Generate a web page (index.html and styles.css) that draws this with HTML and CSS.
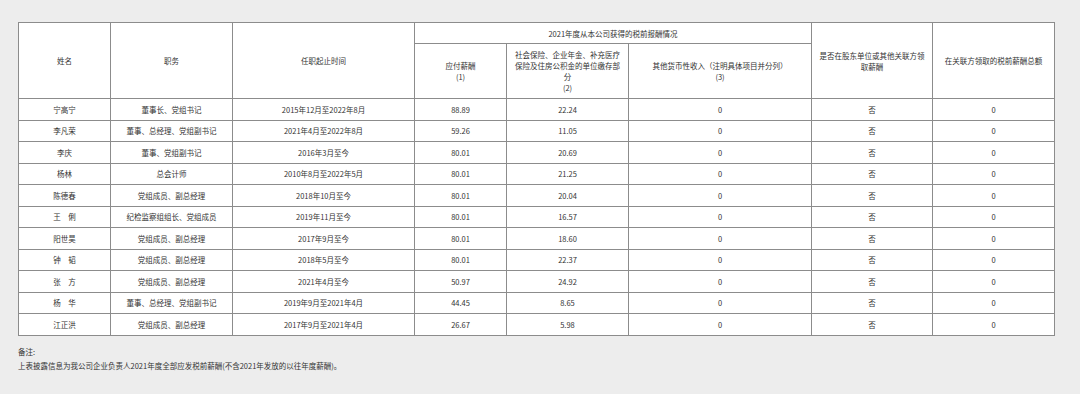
FILE: index.html
```html
<!DOCTYPE html>
<html>
<head>
	<meta charset="utf-8">
	<title>2021年度薪酬情况</title>
	<link rel="stylesheet" href="styles.css">
</head>
<body>
<div class="page">
	<table class="payTable">
		<colgroup>
			<col style="width:92px">
			<col style="width:122px">
			<col style="width:182px">
			<col style="width:92px">
			<col style="width:122px">
			<col style="width:183px">
			<col style="width:121px">
			<col style="width:122px">
		</colgroup>
		<tr class="headTop">
			<td rowspan="2">姓名</td>
			<td rowspan="2">职务</td>
			<td rowspan="2">任职起止时间</td>
			<td colspan="3">2021年度从本公司获得的税前报酬情况</td>
			<td rowspan="2" class="wrap">是否在股东单位或其他关联方领取薪酬</td>
			<td rowspan="2">在关联方领取的税前薪酬总额</td>
		</tr>
		<tr class="headSub">
			<td>应付薪酬<br>(1)</td>
			<td class="wrap">社会保险、企业年金、补充医疗保险及住房公积金的单位缴存部分<br>(2)</td>
			<td>其他货币性收入（注明具体项目并分列）<br>(3)</td>
		</tr>
		<tr><td>宁高宁</td><td>董事长、党组书记</td><td>2015年12月至2022年8月</td><td>88.89</td><td>22.24</td><td>0</td><td>否</td><td>0</td></tr>
		<tr><td>李凡荣</td><td>董事、总经理、党组副书记</td><td>2021年4月至2022年8月</td><td>59.26</td><td>11.05</td><td>0</td><td>否</td><td>0</td></tr>
		<tr><td>李庆</td><td>董事、党组副书记</td><td>2016年3月至今</td><td>80.01</td><td>20.69</td><td>0</td><td>否</td><td>0</td></tr>
		<tr><td>杨林</td><td>总会计师</td><td>2010年8月至2022年5月</td><td>80.01</td><td>21.25</td><td>0</td><td>否</td><td>0</td></tr>
		<tr><td>陈德春</td><td>党组成员、副总经理</td><td>2018年10月至今</td><td>80.01</td><td>20.04</td><td>0</td><td>否</td><td>0</td></tr>
		<tr><td>王　俐</td><td>纪检监察组组长、党组成员</td><td>2019年11月至今</td><td>80.01</td><td>16.57</td><td>0</td><td>否</td><td>0</td></tr>
		<tr><td>阳世昊</td><td>党组成员、副总经理</td><td>2017年9月至今</td><td>80.01</td><td>18.60</td><td>0</td><td>否</td><td>0</td></tr>
		<tr><td>钟　韬</td><td>党组成员、副总经理</td><td>2018年5月至今</td><td>80.01</td><td>22.37</td><td>0</td><td>否</td><td>0</td></tr>
		<tr><td>张　方</td><td>党组成员、副总经理</td><td>2021年4月至今</td><td>50.97</td><td>24.92</td><td>0</td><td>否</td><td>0</td></tr>
		<tr><td>杨　华</td><td>董事、总经理、党组副书记</td><td>2019年9月至2021年4月</td><td>44.45</td><td>8.65</td><td>0</td><td>否</td><td>0</td></tr>
		<tr><td>江正洪</td><td>党组成员、副总经理</td><td>2017年9月至2021年4月</td><td>26.67</td><td>5.98</td><td>0</td><td>否</td><td>0</td></tr>
	</table>
	<div class="notes">
		<p>备注:</p>
		<p>上表披露信息为我公司企业负责人2021年度全部应发税前薪酬(不含2021年发放的以往年度薪酬)。</p>
	</div>
</div>
</body>
</html>
```

FILE: styles.css
```css
*{
	padding: 0px;
	margin: 0px;
}
body{
	background-color: #ededed;
	font-family: "Noto Sans CJK SC", "Liberation Sans", sans-serif;
	font-size: 7.5px;
	color: #333;
}
.page{
	padding: 22px 26px 0 18px;
}
.payTable{
	width: 1036px;
	table-layout: fixed;
	border-collapse: collapse;
	background-color: #fff;
}
.payTable td{
	border: 1px solid #8c8c8c;
	text-align: center;
	vertical-align: middle;
	height: 20.5px;
	line-height: 11px;
	padding: 0 4px;
}
.headTop td{
	height: 20px;
}
.headSub td{
	height: 54px;
}
.payTable td.wrap{
	padding: 0 6px;
}
.notes{
	padding-top: 9px;
	line-height: 14px;
}
```
